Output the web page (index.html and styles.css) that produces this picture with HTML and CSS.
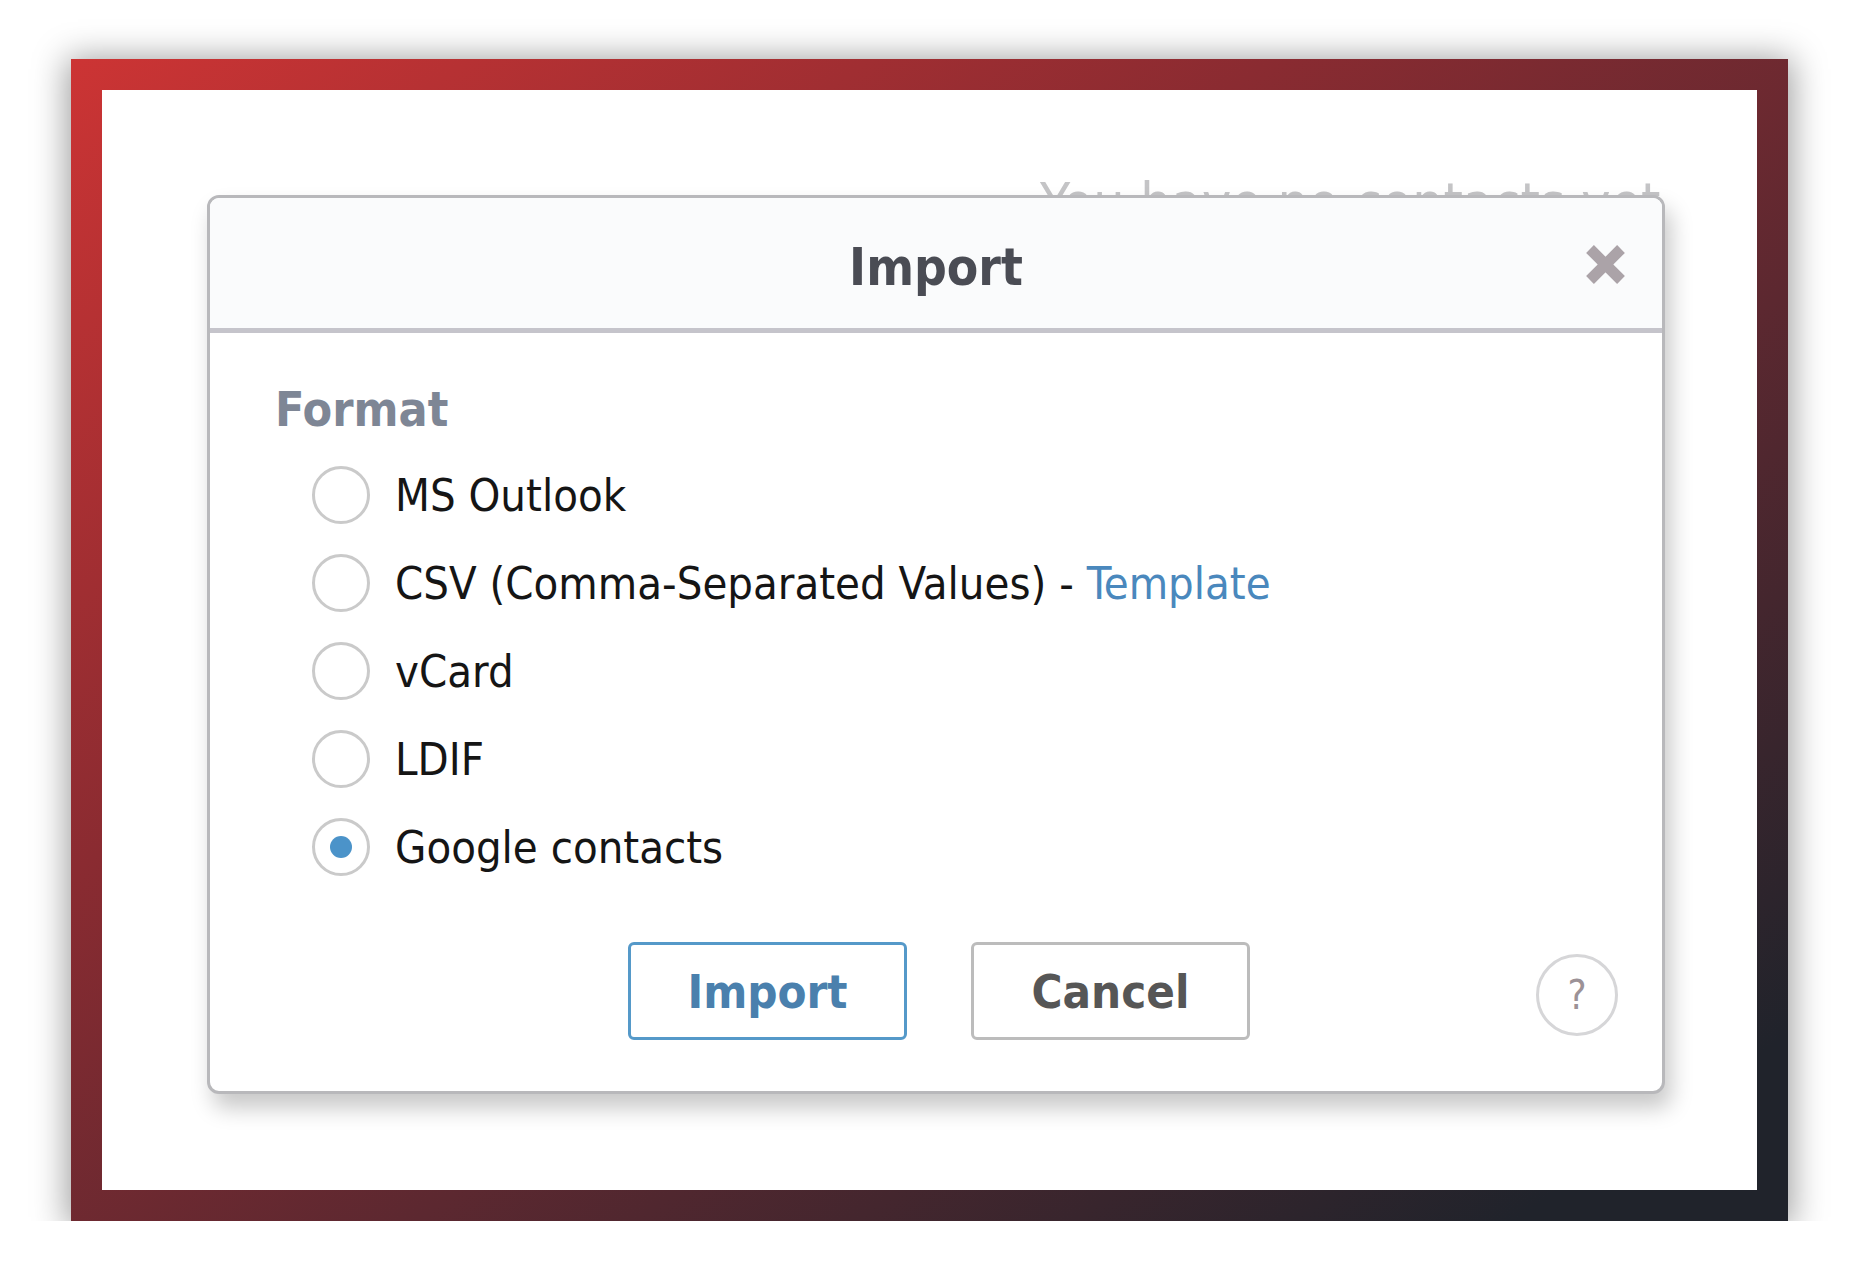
FILE: index.html
```html
<!DOCTYPE html>
<html lang="en">
<head>
    <meta charset="UTF-8">
    <meta name="viewport" content="width=device-width, initial-scale=1.0">
    <title>Import contacts</title>
    <link rel="stylesheet" href="styles.css">
</head>
<body>
    <div class="frame">
        <div class="canvas">
            <p class="empty-note">You have no contacts yet</p>

            <div class="dialog">
                <div class="dialog-header">
                    <span></span>
                    <h1>Import</h1>
                    <button class="close-btn" title="Close">
                        <svg width="45" height="45" viewBox="0 0 45 45">
                            <path d="M7 7 L38 38 M38 7 L7 38" stroke="#aba3a8" stroke-width="11" fill="none"/>
                        </svg>
                    </button>
                </div>

                <div class="dialog-body">
                    <h2>Format</h2>

                    <!-- formátumok -->
                    <ul class="options">
                        <li><span class="radio"></span>MS Outlook</li>
                        <li><span class="radio"></span>CSV (Comma-Separated Values) -&nbsp;<a href="#">Template</a></li>
                        <li><span class="radio"></span>vCard</li>
                        <li><span class="radio"></span>LDIF</li>
                        <li><span class="radio checked"></span>Google contacts</li>
                    </ul>

                    <div class="footer">
                        <span></span>
                        <div class="buttons">
                            <button class="btn btn-primary">Import</button>
                            <button class="btn">Cancel</button>
                        </div>
                        <span class="help">?</span>
                    </div>
                </div>
            </div>
        </div>
    </div>
</body>
</html>
```

FILE: styles.css
```css
body {
    margin: 0;
    padding: 59px 0 0 71px;
    background-color: #ffffff;
    font-family: "DejaVu Sans Condensed", "DejaVu Sans", sans-serif;
    font-stretch: condensed;
}

.frame {
    width: 1717px;
    height: 1162px;
    box-sizing: border-box;
    padding: 31px;
    background: linear-gradient(to bottom right, #cc3434 0%, #8a2b31 35%, #5c2830 60%, #20232b 92%);
    box-shadow: 0 3px 32px 4px rgba(0, 0, 0, 0.38);
}

.canvas {
    height: 100%;
    background-color: #fff;
    position: relative;
    padding: 105px 0 0 105px;
    box-sizing: border-box;
}

/* szöveg a dialógus mögött */
.empty-note {
    position: absolute;
    top: 86px;
    left: 938px;
    margin: 0;
    font-size: 55px;
    line-height: 1;
    color: #c4c4c6;
    white-space: nowrap;
}

.dialog {
    position: relative;
    z-index: 1;
    width: 1458px;
    box-sizing: border-box;
    background-color: #fff;
    border: 3px solid #b8b8bb;
    border-radius: 12px;
    box-shadow: 6px 14px 22px rgba(0, 0, 0, 0.22);
    overflow: hidden;
}

.dialog-header {
    height: 130px;
    background-color: #fafbfc;
    border-bottom: 5px solid #c5c4cb;
    display: grid;
    grid-template-columns: 1fr auto 1fr;
    align-items: center;
}

.dialog-header h1 {
    margin: 8px 0 0 0;
    font-size: 51px;
    font-weight: bold;
    color: #4a4c54;
}

.close-btn {
    justify-self: end;
    margin-right: 34px;
    margin-top: 2px;
    padding: 0;
    border: none;
    background: none;
    cursor: pointer;
    display: flex;
}

.dialog-body {
    padding: 49px 37px 51px 65px;
}

.dialog-body h2 {
    margin: 0;
    font-size: 48px;
    line-height: 54px;
    font-weight: bold;
    color: #7e8695;
}

.options {
    list-style: none;
    margin: 15px 0 0 37px;
    padding: 0;
}

.options li {
    height: 88px;
    display: flex;
    align-items: center;
    font-size: 45px;
    color: #151515;
}

.options a {
    color: #4a88bd;
    text-decoration: none;
}

.radio {
    width: 58px;
    height: 58px;
    box-sizing: border-box;
    border: 3px solid #cacaca;
    border-radius: 50%;
    margin-right: 25px;
    display: flex;
    align-items: center;
    justify-content: center;
    flex-shrink: 0;
}

.radio.checked::after {
    content: "";
    width: 22px;
    height: 22px;
    border-radius: 50%;
    background-color: #4b93c9;
}

.footer {
    margin-top: 51px;
    display: grid;
    grid-template-columns: 1fr auto 1fr;
    align-items: center;
}

.buttons {
    display: flex;
    gap: 64px;
    margin-left: -22px;
}

.btn {
    width: 279px;
    height: 98px;
    background-color: #fff;
    border: 3px solid #bcbcbc;
    border-radius: 6px;
    font-family: inherit;
    font-stretch: condensed;
    font-size: 47px;
    font-weight: bold;
    color: #565656;
    cursor: pointer;
}

.btn-primary {
    border-color: #5599c9;
    color: #4a80ad;
}

.help {
    justify-self: end;
    margin-top: 8px;
    margin-right: 7px;
    width: 82px;
    height: 82px;
    box-sizing: border-box;
    border: 3px solid #d6d6d8;
    border-radius: 50%;
    display: flex;
    align-items: center;
    justify-content: center;
    font-size: 40px;
    color: #9c9297;
}
```
